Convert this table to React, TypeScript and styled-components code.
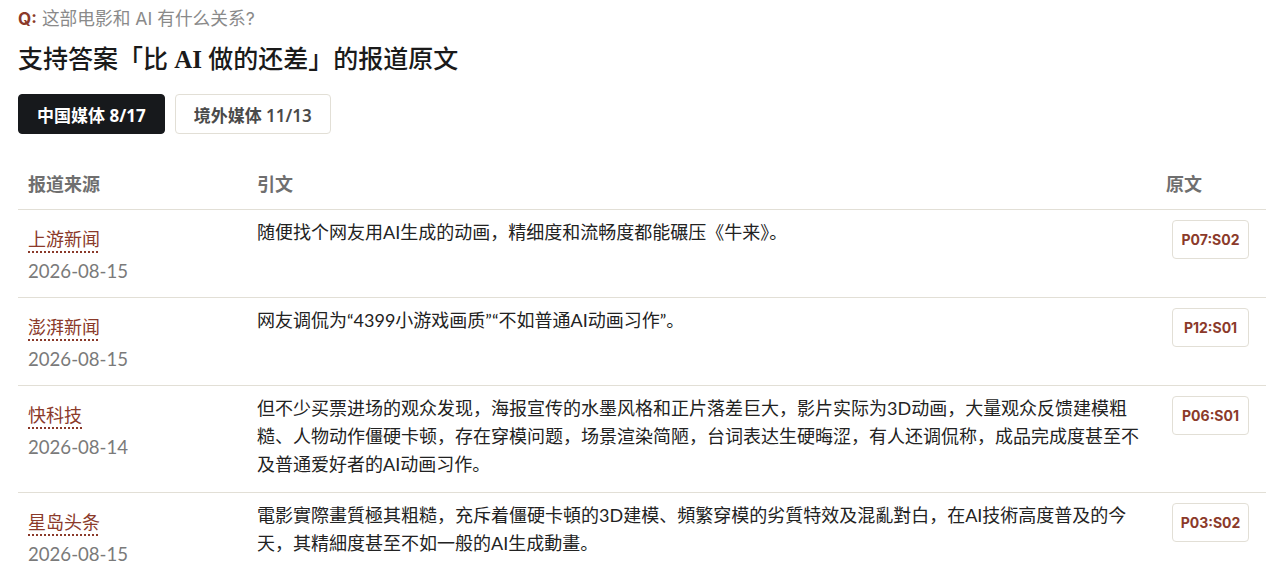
import React from "react";
import styled, { createGlobalStyle } from "styled-components";

const GlobalStyle = createGlobalStyle`
  html, body { margin: 0; padding: 0; background: #ffffff; }
  body { font-family: Lato, "Noto Sans CJK SC", sans-serif; color: #222; }
  * { box-sizing: border-box; }
`;

const Page = styled.div`
  padding: 7px 0 0 18px;
  width: 1266px;
  overflow: hidden;
`;

const Question = styled.div`
  font-family: Inter, "Noto Sans CJK SC", sans-serif;
  font-size: 17.7px;
  line-height: 24px;
  color: #8a8a8a;
`;

const QLabel = styled.span`
  color: #8b3a2a;
  font-weight: 700;
  font-size: 17px;
  margin-right: 5px;
`;

const Title = styled.h1`
  margin: 11px 0 0;
  font-family: "Liberation Serif", "Noto Sans CJK SC", serif;
  font-size: 25px;
  line-height: 36px;
  font-weight: 500;
  color: #1a1a1a;
`;

const Latin = styled.span`
  font-weight: 700;
`;

const Tabs = styled.div`
  display: flex;
  gap: 10px;
  margin-top: 16px;
`;

const Tab = styled.button<{ $active?: boolean }>`
  height: 40px;
  padding: 0 18px;
  border-radius: 4px;
  font-family: "Noto Sans", "Noto Sans CJK SC", sans-serif;
  font-size: 17px;
  font-weight: ${(p) => (p.$active ? 700 : 600)};
  background: ${(p) => (p.$active ? "#17191c" : "#ffffff")};
  color: ${(p) => (p.$active ? "#ffffff" : "#4a4a4a")};
  border: 1px solid ${(p) => (p.$active ? "#17191c" : "#e2dfd6")};
  cursor: pointer;
`;

const Table = styled.table`
  margin-top: 26px;
  width: 1260px;
  border-collapse: collapse;
  table-layout: fixed;
`;

const Th = styled.th<{ $w?: number }>`
  width: ${(p) => (p.$w ? `${p.$w}px` : "auto")};
  text-align: left;
  padding: 10px 10px 11px;
  font-size: 18px;
  line-height: 28px;
  font-weight: 700;
  color: #6f6f6f;
  border-bottom: 1px solid #e2dfd6;
`;

const Tr = styled.tr`
  border-bottom: 1px solid #e2dfd6;
`;

const Td = styled.td`
  vertical-align: top;
  padding: 8px 10px 14px;
  font-size: 18px;
  line-height: 28px;
  color: #222;
`;

const SourceLink = styled.a`
  display: inline-block;
  margin-top: 7px;
  color: #8b3a2a;
  text-decoration: underline dotted #8b3a2a;
  text-decoration-thickness: 2px;
  text-underline-offset: 5px;
  font-size: 18px;
  line-height: 28px;
`;

const DateText = styled.div`
  margin-top: 7px;
  color: #7a7a7a;
  font-size: 18.6px;
  line-height: 23px;
`;

const Badge = styled.span`
  display: inline-flex;
  align-items: center;
  justify-content: center;
  margin: 2px 0 0 6px;
  width: 77px;
  height: 39px;
  border: 1px solid #e2dfd6;
  border-radius: 4px;
  font-family: Inter, "Noto Sans CJK SC", sans-serif;
  font-size: 14px;
  font-weight: 700;
  color: #8b3a2a;
`;

const SourceCell = styled.div`
  display: flex;
  flex-direction: column;
  align-items: flex-start;
`;

type Row = { source: string; date: string; quote: string; ref: string };

const rows: Row[] = [
  {
    source: "上游新闻",
    date: "2026-08-15",
    quote: "随便找个网友用AI生成的动画，精细度和流畅度都能碾压《牛来》。",
    ref: "P07:S02",
  },
  {
    source: "澎湃新闻",
    date: "2026-08-15",
    quote: "网友调侃为“4399小游戏画质”“不如普通AI动画习作”。",
    ref: "P12:S01",
  },
  {
    source: "快科技",
    date: "2026-08-14",
    quote:
      "但不少买票进场的观众发现，海报宣传的水墨风格和正片落差巨大，影片实际为3D动画，大量观众反馈建模粗糙、人物动作僵硬卡顿，存在穿模问题，场景渲染简陋，台词表达生硬晦涩，有人还调侃称，成品完成度甚至不及普通爱好者的AI动画习作。",
    ref: "P06:S01",
  },
  {
    source: "星岛头条",
    date: "2026-08-15",
    quote:
      "電影實際畫質極其粗糙，充斥着僵硬卡頓的3D建模、頻繁穿模的劣質特效及混亂對白，在AI技術高度普及的今天，其精細度甚至不如一般的AI生成動畫。",
    ref: "P03:S02",
  },
];

export default function App() {
  return (
    <Page>
      <GlobalStyle />
      <Question>
        <QLabel>Q:</QLabel>这部电影和 AI 有什么关系?
      </Question>
      <Title>
        支持答案「比 <Latin>AI</Latin> 做的还差」的报道原文
      </Title>
      <Tabs>
        <Tab $active>中国媒体 8/17</Tab>
        <Tab>境外媒体 11/13</Tab>
      </Tabs>
      <Table>
        <thead>
          <tr>
            <Th $w={229}>报道来源</Th>
            <Th>引文</Th>
            <Th $w={122}>原文</Th>
          </tr>
        </thead>
        <tbody>
          {rows.map((r) => (
            <Tr key={r.ref}>
              <Td>
                <SourceCell>
                  <SourceLink>{r.source}</SourceLink>
                  <DateText>{r.date}</DateText>
                </SourceCell>
              </Td>
              <Td>{r.quote}</Td>
              <Td>
                <Badge>{r.ref}</Badge>
              </Td>
            </Tr>
          ))}
        </tbody>
      </Table>
    </Page>
  );
}
